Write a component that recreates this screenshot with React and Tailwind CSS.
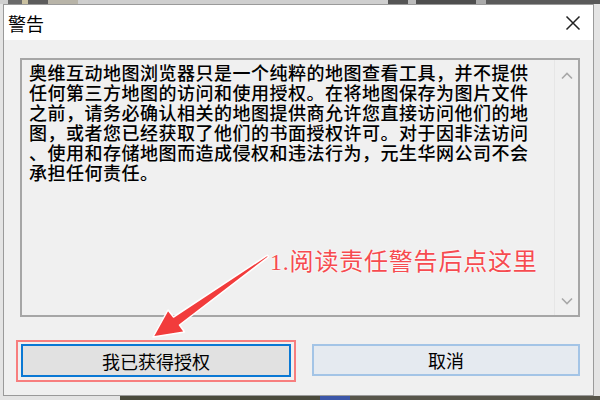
const lines = [
  "奥维互动地图浏览器只是一个纯粹的地图查看工具，并不提供",
  "任何第三方地图的访问和使用授权。在将地图保存为图片文件",
  "之前，请务必确认相关的地图提供商允许您直接访问他们的地",
  "图，或者您已经获取了他们的书面授权许可。对于因非法访问",
  "、使用和存储地图而造成侵权和违法行为，元生华网公司不会",
  "承担任何责任。",
];

const cjk = { fontFamily: '"Noto Sans CJK SC", "Noto Sans", sans-serif' };

const Chevron = ({ down }) => (
  <svg width="12" height="8" viewBox="0 0 12 8" fill="none">
    <path
      d={down ? "M1 1.5 L6 6.5 L11 1.5" : "M1 6.5 L6 1.5 L11 6.5"}
      stroke="#a8a8a8"
      strokeWidth="1.6"
    />
  </svg>
);

const App = () => {
  return (
    <div
      className="relative w-[600px] h-[400px] bg-[#e4e4e4] overflow-hidden flex flex-col"
      style={cjk}
    >
      {/* desktop behind the dialog */}
      <div className="h-[4px] flex shrink-0">
        <div className="w-[8px] bg-[#d0d0d0]" />
        <div className="w-[14px] bg-[#6a6a6a]" />
        <div className="w-[6px] bg-[#c9c0a0]" />
        <div className="w-[20px] bg-[#5c5c5c]" />
        <div className="w-[30px] bg-[#b8b4a8]" />
        <div className="w-[310px] bg-[#cfcfcf]" />
        <div className="w-[20px] bg-[#555]" />
        <div className="w-[8px] bg-[#bbb]" />
        <div className="w-[60px] bg-[#4e4e4e]" />
        <div className="w-[10px] bg-[#aaa]" />
        <div className="flex-1 bg-[#5a5a5a]" />
      </div>

      <div className="flex flex-1 pl-[3px]">
        <div className="w-[591px] h-[392px] flex flex-col border border-[#9a9a9a] bg-[#f0f0f0]">
          {/* title bar */}
          <div className="h-[35px] bg-white flex items-center justify-between pl-[4px] pr-[12px] shrink-0">
            <span className="text-[18px] leading-none text-black">警告</span>
            <svg width="16" height="16" viewBox="0 0 16 16">
              <path d="M1.5 1.5 L14.5 14.5 M14.5 1.5 L1.5 14.5" stroke="#222" strokeWidth="1.5" />
            </svg>
          </div>

          {/* body */}
          <div className="flex-1 flex flex-col pt-[18px] pl-[16px] pr-[13px]">
            <div className="h-[259px] border-2 border-[#a6a6a6] flex">
              <div className="flex-1 pl-[7px] pt-[2px] text-[18px] leading-[20px] tracking-[0.5px] text-black font-medium">
                {lines.map((l, i) => (
                  <div key={i} className="h-[20px] whitespace-nowrap">{l}</div>
                ))}
              </div>
              <div className="w-[24px] border-l border-[#e6e6e6] flex flex-col items-center justify-between pt-[12px] pb-[10px]">
                <Chevron />
                <Chevron down />
              </div>
            </div>

            <div className="flex gap-[21px] mt-[27px] pl-[1px]">
              <div className="relative">
                <div className="absolute -left-[5px] -right-[5px] -top-[4px] -bottom-[5px] border-2 border-[#f77e7e]" />
                <button className="relative w-[270px] h-[33px] border-2 border-[#0a78d4] bg-[#e1e1e1] text-[18px] leading-none text-black">
                  我已获得授权
                </button>
              </div>
              <button className="w-[270px] h-[32px] border-2 border-[#a3c4e6] bg-[#e5eaf0] text-[18px] leading-none text-black">
                取消
              </button>
            </div>
          </div>
        </div>
      </div>

      <div className="h-[4px] flex shrink-0">
        <div className="w-[120px] bg-[#e4e4e4]" />
        <div className="w-[200px] bg-[#4a4a3c]" />
        <div className="w-[30px] bg-[#3b56a8]" />
        <div className="flex-1 bg-[#57554a]" />
      </div>

      {/* annotation */}
      <svg className="absolute left-0 top-0 pointer-events-none" width="600" height="400">
        <polygon
          points="268.6,256.8 179.5,325 184.5,332 153,337 168,310 173.5,317 267.4,255.2"
          fill="#f23c3c"
          stroke="#ffffff"
          strokeWidth="1.5"
          strokeLinejoin="round"
        />
      </svg>
      <div
        className="absolute left-[270px] top-[246px] text-[24px] leading-[28px] tracking-[0.8px] text-[#f64b50] whitespace-nowrap"
        style={{ textShadow: "0 0 2px #fff, 0 0 2px #fff" }}
      >
        <span style={{ fontFamily: '"Liberation Serif", serif' }}>1.</span>阅读责任警告后点这里
      </div>
    </div>
  );
};

export default App;
